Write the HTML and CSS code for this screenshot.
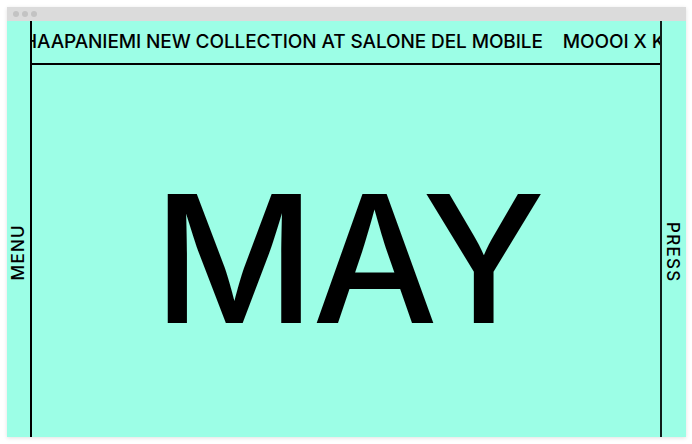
FILE: index.html
```html
<!DOCTYPE html>
<html lang="en">
<head>
<meta charset="utf-8">
<title>May</title>
<link rel="stylesheet" href="styles.css">
</head>
<body>
<div class="window">
  <div class="titlebar">
    <span class="dot"></span><span class="dot"></span><span class="dot"></span>
  </div>
  <div class="site">
    <aside class="rail rail-left"><span class="rail-label label-up">MENU</span></aside>
    <main class="main">
      <div class="ticker">
        <div class="ticker-track">HAAPANIEMI NEW COLLECTION AT SALONE DEL MOBILE<span class="gap"></span>MOOOI X KUAPANIEMI</div>
      </div>
      <div class="hero"><h1 class="month">MAY</h1></div>
    </main>
    <aside class="rail rail-right"><span class="rail-label label-down">PRESS</span></aside>
  </div>
</div>
</body>
</html>
```
FILE: styles.css
```css
* { box-sizing: border-box; }
html, body { margin: 0; padding: 0; }
body {
  background: #ffffff;
  width: 692px;
  height: 444px;
  padding: 7px 6px 7px 7px;
  font-family: Inter, "Liberation Sans", Arial, sans-serif;
  color: #000;
  overflow: hidden;
}
.window {
  width: 679px;
  height: 430px;
  display: flex;
  flex-direction: column;
  box-shadow: 0 1px 4px rgba(0,0,0,0.12);
}
.titlebar {
  height: 14px;
  flex: none;
  background: #dbdbdb;
  display: flex;
  align-items: center;
  gap: 3px;
  padding-left: 6px;
}
.dot {
  width: 6px;
  height: 6px;
  border-radius: 50%;
  background: #c3c3c3;
}
.site {
  flex: 1;
  background: #9cfee6;
  display: grid;
  grid-template-columns: 25px minmax(0, 1fr) 26px;
  min-height: 0;
  overflow: hidden;
}
.rail {
  display: flex;
  align-items: center;
  justify-content: center;
  padding-top: 46px;
}
.rail-left { border-right: 2px solid #000; }
.rail-right { border-left: 2px solid #0f1f1b; }
.rail-label {
  font-size: 17px;
  font-weight: 500;
  letter-spacing: 1.3px;
  line-height: 1;
  white-space: nowrap;
}
.label-up { writing-mode: vertical-rl; transform: rotate(180deg); margin-left: -1px; }
.label-down { writing-mode: vertical-rl; margin-left: -3px; }
.main {
  display: flex;
  flex-direction: column;
  min-width: 0;
  overflow: hidden;
}
.ticker {
  height: 44px;
  flex: none;
  border-bottom: 2px solid #000;
  overflow: hidden;
  display: flex;
  align-items: center;
}
.ticker-track {
  white-space: nowrap;
  font-size: 19px;
  font-weight: 500;
  letter-spacing: -0.1px;
  margin-left: -9px;
  padding-bottom: 1px;
}
.gap { display: inline-block; width: 20px; }
.hero {
  flex: 1;
  display: flex;
  align-items: center;
  justify-content: center;
  padding-top: 16px;
}
.month {
  margin: 0;
  font-weight: 530;
  font-size: 177px;
  line-height: 1;
  letter-spacing: -2.6px;
  padding-left: 4px;
}
```
